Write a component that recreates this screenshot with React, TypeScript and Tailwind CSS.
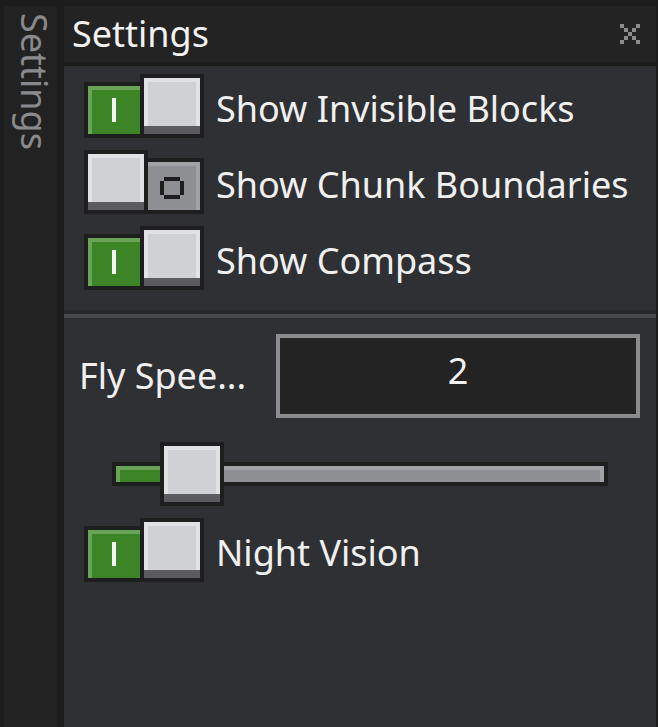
import React from "react";

const OnToggle = () => (
  <div className="flex items-end w-[120px] h-[64px] shrink-0">
    <div className="w-[56px] h-[56px] bg-[#1e1e1e] pl-[4px] pt-[4px] pb-[4px]">
      <div className="w-full h-full bg-[#3b8526] border-t-[4px] border-l-[4px] border-[#6aa459] flex items-center justify-center pr-[4px]">
        <div className="w-[4px] h-[24px] bg-[#f4f4f4] -mt-[4px]" />
      </div>
    </div>
    <div className="w-[64px] h-[64px] bg-[#1e1e1e] p-[4px]">
      <div className="w-full h-full flex flex-col">
        <div className="flex-1 bg-[#d0d1d4] border-t-[4px] border-l-[4px] border-r-[4px] border-[#e1e2e4]" />
        <div className="h-[8px] bg-[#5c5c5e]" />
      </div>
    </div>
  </div>
);

const OffToggle = () => (
  <div className="flex items-end w-[120px] h-[64px] shrink-0">
    <div className="w-[64px] h-[64px] bg-[#1e1e1e] p-[4px]">
      <div className="w-full h-full flex flex-col">
        <div className="flex-1 bg-[#d0d1d4] border-t-[4px] border-l-[4px] border-r-[4px] border-[#e1e2e4]" />
        <div className="h-[8px] bg-[#5c5c5e]" />
      </div>
    </div>
    <div className="w-[56px] h-[56px] bg-[#1e1e1e] pr-[4px] pt-[4px] pb-[4px]">
      <div className="w-full h-full bg-[#8e8f93] border-t-[4px] border-r-[4px] border-[#a1a2a5] flex items-center justify-center">
        <svg width="24" height="22" viewBox="0 0 24 22" shapeRendering="crispEdges">
          <rect x="4" y="0" width="16" height="4" fill="#1e1e1e" />
          <rect x="4" y="18" width="16" height="4" fill="#1e1e1e" />
          <rect x="0" y="4" width="4" height="14" fill="#1e1e1e" />
          <rect x="20" y="4" width="4" height="14" fill="#1e1e1e" />
        </svg>
      </div>
    </div>
  </div>
);

const ToggleRow = ({ on, label }: { on: boolean; label: string }) => (
  <div className="flex items-center h-[64px]">
    {on ? <OnToggle /> : <OffToggle />}
    <span className="ml-[12px] pt-[6px] text-[36px] text-[#f0f0f0] whitespace-nowrap leading-normal">{label}</span>
  </div>
);

export default function App() {
  return (
    <div className="w-[658px] h-[727px] bg-[#1c1c1c] flex pt-[6px] overflow-hidden font-['Noto_Sans',sans-serif]">
      <div className="w-[64px] h-full flex">
        <div className="ml-[4px] w-[53px] h-full bg-[#222222]">
          <div className="ml-[3px] pt-[7px] text-[36px] text-[#8a8a8c] [writing-mode:vertical-rl] leading-normal">
            Settings
          </div>
        </div>
      </div>
      <div className="w-[592px] h-full flex flex-col">
        <div className="h-[56px] bg-[#232323] flex items-center justify-between pl-[8px] pr-[16px]">
          <span className="text-[36px] text-[#f2f2f2] leading-normal">Settings</span>
          <svg width="20" height="20" viewBox="0 0 20 20" shapeRendering="crispEdges">
            <g fill="#8c8c8c">
              <rect x="0" y="0" width="4" height="4" />
              <rect x="4" y="4" width="4" height="4" />
              <rect x="8" y="8" width="4" height="4" />
              <rect x="12" y="12" width="4" height="4" />
              <rect x="16" y="16" width="4" height="4" />
              <rect x="16" y="0" width="4" height="4" />
              <rect x="12" y="4" width="4" height="4" />
              <rect x="4" y="12" width="4" height="4" />
              <rect x="0" y="16" width="4" height="4" />
            </g>
          </svg>
        </div>
        <div className="h-[4px] bg-[#1c1c1c]" />
        <div className="flex-1 bg-[#2f3033] flex flex-col">
          <div className="pt-[8px] pl-[20px] flex flex-col gap-[12px]">
            <ToggleRow on label="Show Invisible Blocks" />
            <ToggleRow on={false} label="Show Chunk Boundaries" />
            <ToggleRow on label="Show Compass" />
          </div>
          <div className="mt-[20px] h-[4px] bg-[#28292b]" />
          <div className="h-[4px] bg-[#48494c]" />
          <div className="mt-[16px] pl-[15px] pr-[16px] flex items-center h-[84px]">
            <span className="w-[197px] shrink-0 text-[36px] text-[#f0f0f0] leading-normal whitespace-nowrap">Fly Spee...</span>
            <div className="flex-1 h-[84px] border-[4px] border-[#8c8c8f] bg-[#232323] flex items-center justify-center pb-[11px]">
              <span className="text-[36px] text-[#f2f2f2] leading-normal">2</span>
            </div>
          </div>
          <div className="mt-[24px] pl-[48px] h-[64px] flex items-center">
            <div className="relative w-[496px] h-[24px] bg-[#1e1e1e] p-[4px] flex">
              <div className="w-[48px] h-full bg-[#3b8526] border-l-[4px] border-t-[4px] border-[#6aa459]" />
              <div className="flex-1 h-full bg-[#8e8f93] border-t-[4px] border-r-[4px] border-[#a1a2a5]" />
              <div className="absolute left-[48px] top-[-20px] w-[64px] h-[64px] bg-[#1e1e1e] p-[4px]">
                <div className="w-full h-full flex flex-col">
                  <div className="flex-1 bg-[#d0d1d4] border-t-[4px] border-l-[4px] border-r-[4px] border-[#e1e2e4]" />
                  <div className="h-[8px] bg-[#5c5c5e]" />
                </div>
              </div>
            </div>
          </div>
          <div className="mt-[12px] pl-[20px]">
            <ToggleRow on label="Night Vision" />
          </div>
        </div>
      </div>
      <div className="w-[2px] h-full bg-[#1c1c1c]" />
    </div>
  );
}
